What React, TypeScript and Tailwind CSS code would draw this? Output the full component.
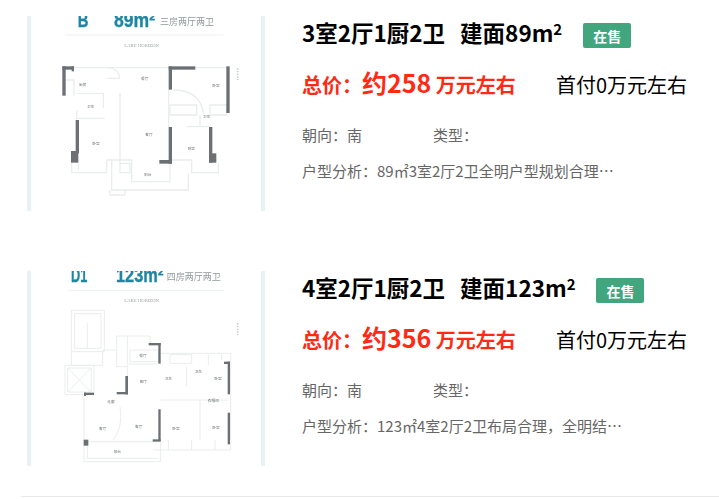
const lineColor = "#eaeded";
const wallColor = "#6a7073";

function Heading({ code, area, rooms, codeX, codeW, areaX, areaW, roomsX, y }: { code: string; area: string; rooms: string; codeX: number; codeW: number; areaX: number; areaW: number; roomsX: number; y: number }) {
  return (
    <g>
      <text x={codeX} y={y} textLength={codeW} lengthAdjust="spacingAndGlyphs" fontFamily="Liberation Sans, sans-serif" fontWeight="700" fontSize="62" fill="#1f86a3" stroke="#1f86a3" strokeWidth="1">{code}</text>
      <text x={areaX} y={y} textLength={areaW} lengthAdjust="spacingAndGlyphs" fontFamily="Liberation Sans, sans-serif" fontWeight="700" fontSize="60" fill="#1f86a3" stroke="#1f86a3" strokeWidth="1">{area}</text>
      <text x={roomsX} y={y - 5} fontFamily="Noto Sans CJK SC, sans-serif" fontSize="27" fill="#8f9a9c">{rooms}</text>
    </g>
  );
}

function PlanB() {
  const walls = [
    [187, 199, 35, 10], [187, 199, 10, 88], [215, 199, 7, 15],
    [506, 199, 80, 10], [506, 199, 10, 70], [679, 199, 10, 140],
    [227, 360, 10, 100], [213, 453, 22, 35], [506, 381, 10, 110],
    [478, 480, 38, 11], [627, 381, 10, 107], [627, 460, 22, 28],
  ];
  const lines = [
    "M222 203H506M586 203H679",
    "M197 240H222V287M230 280H310V325M230 330V355H315",
    "M360 280V490M506 270V381M320 203Q360 205 358 235M320 235H358",
    "M510 315H590V345H510ZM630 315H680V345H630ZM600 345V380M560 380H627M520 270Q600 270 610 340",
    "M215 490V518H320V480H395V545H510V480H575V518H655V490M335 480V570H565V520",
    "M330 570V585H375V570M235 510V490M360 490H390V518H360Z",
  ];
  const labels = [
    ["厨房", 248, 257], ["餐厅", 434, 240], ["卧室", 648, 261], ["卫生", 272, 323],
    ["客厅", 447, 409], ["卧室", 288, 434], ["卧室", 574, 451], ["阳台", 443, 527], ["卫生", 620, 353],
  ] as const;
  return (
    <svg viewBox="81 48 714 585" className="block h-[195px] w-[238px] shrink-0">
      <defs>
        <filter id="soft-b"><feGaussianBlur stdDeviation="1.6" /></filter>
      </defs>
      <rect x="81" y="48" width="714" height="585" fill="#fff" />
      <rect x="81" y="48" width="12" height="585" fill="#e8f1f4" />
      <rect x="783" y="48" width="12" height="585" fill="#e8f1f4" />
      <g filter="url(#soft-b)">
        <Heading code="B" area="89m²" rooms="三房两厅两卫" codeX={233} codeW={32} areaX={342} areaW={123} roomsX={480} y={81} />
        <text x="373" y="140" fontFamily="Liberation Serif, serif" fontSize="14" fill="#9aa2a4">LAKE HORIZON</text>
        <path d="M195 105H670" stroke="#e4e8e8" strokeWidth="2" fill="none" />
        {lines.map((d) => (
          <path key={d} d={d} stroke={lineColor} strokeWidth="4" fill="none" />
        ))}
        {walls.map(([x, y, w, h]) => (
          <rect key={`${x}-${y}`} x={x} y={y} width={w} height={h} fill={wallColor} />
        ))}
        {labels.map(([t, x, y]) => (
          <text key={`${x}-${y}`} x={x} y={y} textAnchor="middle" fontFamily="Noto Sans CJK SC, sans-serif" fontSize="11" fill="#70787a">{t}</text>
        ))}
        <path d="M713 205V240" stroke="#c4caca" strokeWidth="5" strokeDasharray="4 4" />
      </g>
    </svg>
  );
}

function PlanD() {
  const walls = [
    [446, 249, 36, 7], [475, 249, 7, 62], [376, 348, 8, 55], [350, 396, 34, 7],
    [252, 398, 30, 7], [252, 398, 6, 10], [475, 448, 7, 95], [458, 538, 24, 7],
    [672, 305, 18, 7], [683, 305, 7, 98], [683, 458, 7, 95], [251, 539, 14, 18],
  ];
  const lines = [
    "M214 151H313V275H214ZM224 161H303V265H224ZM262 190V265",
    "M195 316H282V404H195ZM203 324H274V396H203ZM203 324L274 396M274 324L203 396",
    "M214 275V316H308V270H350M350 228H382V400M350 228V320H382",
    "M382 228H450V250M390 270H475V305H390ZM385 312H475",
    "M252 404V605H482V545M252 545H460M262 545V595H472",
    "M482 280H692V570H460M510 284H575V310H510ZM625 284V315M665 284V300",
    "M560 320V380M600 420V540M482 420H685M505 540V570M575 540V570M645 540V570",
    "M360 440Q370 500 340 540",
  ];
  const labels = [
    ["餐厅", 429, 290], ["客厅", 430, 369], ["卫生", 505, 360], ["卫生", 595, 338], ["卧室", 654, 361],
    ["走廊", 333, 430], ["客厅", 308, 509], ["客厅", 416, 505], ["卧室", 528, 509], ["卧室", 648, 508],
    ["衣帽间", 640, 425], ["阳台", 352, 578],
  ] as const;
  return (
    <svg viewBox="81 33 714 585" className="block h-[195px] w-[238px] shrink-0">
      <defs>
        <filter id="soft-d"><feGaussianBlur stdDeviation="1.6" /></filter>
      </defs>
      <rect x="81" y="33" width="714" height="585" fill="#fff" />
      <rect x="81" y="33" width="12" height="585" fill="#e8f1f4" />
      <rect x="783" y="33" width="12" height="585" fill="#e8f1f4" />
      <g filter="url(#soft-d)">
        <Heading code="D1" area="123m²" rooms="四房两厅两卫" codeX={213} codeW={49} areaX={348} areaW={142} roomsX={500} y={66} />
        <text x="373" y="125" fontFamily="Liberation Serif, serif" fontSize="14" fill="#9aa2a4">LAKE HORIZON</text>
        <path d="M205 91H672" stroke="#e4e8e8" strokeWidth="2" fill="none" />
        {lines.map((d) => (
          <path key={d} d={d} stroke={lineColor} strokeWidth="3" fill="none" />
        ))}
        {walls.map(([x, y, w, h]) => (
          <rect key={`${x}-${y}`} x={x} y={y} width={w} height={h} fill={wallColor} />
        ))}
        {labels.map(([t, x, y]) => (
          <text key={`${x}-${y}`} x={x} y={y} textAnchor="middle" fontFamily="Noto Sans CJK SC, sans-serif" fontSize="11" fill="#70787a">{t}</text>
        ))}
        <path d="M713 190V225" stroke="#c4caca" strokeWidth="5" strokeDasharray="4 4" />
      </g>
    </svg>
  );
}

type Item = {
  layout: string;
  area: string;
  price: string;
  analysis: string;
  plan: React.ReactNode;
};

const items: Item[] = [
  { layout: "3室2厅1厨2卫", area: "建面89m", price: "约258", analysis: "户型分析：89㎡3室2厅2卫全明户型规划合理…", plan: <PlanB /> },
  { layout: "4室2厅1厨2卫", area: "建面123m", price: "约356", analysis: "户型分析：123㎡4室2厅2卫布局合理，全明结…", plan: <PlanD /> },
];

export default function App() {
  return (
    <div className="h-[499px] w-[719px] overflow-hidden bg-white font-['Noto_Sans_CJK_SC',sans-serif]">
      <div className="flex flex-col gap-[60px] pl-[27px] pt-4">
        {items.map((item) => (
          <div key={item.layout} className="flex h-[195px] gap-[37px]">
            {item.plan}
            <div className="min-w-0 flex-1">
              <div className="flex h-8 items-center text-[22.5px] font-bold leading-8 text-black">
                <span>{item.layout}</span>
                <span className="ml-[15px]">
                  {item.area}
                  <sup className="text-[15px] leading-none">2</sup>
                </span>
                <span className="ml-[21px] mt-[7px] flex h-[25px] w-12 items-center justify-center rounded-[2px] bg-[#41a67e] text-sm font-bold text-white">
                  在售
                </span>
              </div>
              <div className="mt-[19px] flex h-9 items-center">
                <span className="-mt-1 w-[254px] text-[20px] font-bold leading-9 text-[#ff2a14]">
                  总价：<span className="text-[25px]">{item.price}</span> 万元左右
                </span>
                <span className="text-[20px] leading-9 text-black">首付0万元左右</span>
              </div>
              <div className="mt-5 flex h-6 text-[15px] leading-6 text-[#666]">
                <span className="w-[131px]">朝向：南</span>
                <span>类型：</span>
              </div>
              <p className="mt-3 h-6 whitespace-nowrap text-[15px] leading-6 text-[#666]">{item.analysis}</p>
            </div>
          </div>
        ))}
      </div>
      <div className="ml-[21px] mt-[30px] h-px bg-[#e8e8e8]" />
    </div>
  );
}
